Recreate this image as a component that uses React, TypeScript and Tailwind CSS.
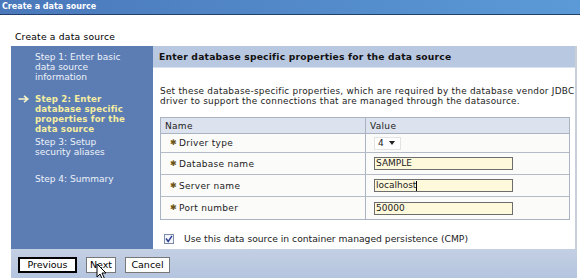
import { useState } from 'react';

const rows = [
  { label: 'Driver type', kind: 'select', value: '4', h: 'h-[19px]' },
  { label: 'Database name', kind: 'input', value: 'SAMPLE', h: 'h-[22px]' },
  { label: 'Server name', kind: 'input', value: 'localhost', h: 'h-[22px]' },
  { label: 'Port number', kind: 'input', value: '50000', h: 'h-[22px]' },
];

function Cursor() {
  return (
    <svg width="12" height="18" viewBox="0 0 12 18" className="absolute left-[96px] top-[263px]">
      <path d="M1 1 L1 14 L4 11 L6.5 16.5 L8.5 15.5 L6 10 L10 10 Z" fill="#ffffff" stroke="#000000" strokeWidth="1" />
    </svg>
  );
}

export default function App() {
  const [cmp, setCmp] = useState(true);

  return (
    <div className="relative w-[580px] h-[278px] overflow-hidden bg-white text-black font-['DejaVu_Sans',Verdana,sans-serif]">
      {/* Barra de título */}
      <div className="h-[15px] bg-gradient-to-r from-[#4a78bb] to-[#5b9ad6] border-b border-[#23406b] pl-[2px] text-[8px] font-bold text-white leading-[14px]">
        Create a data source
      </div>

      <div className="h-[31px] pl-[15px] pt-[16px] text-[9.2px] leading-[12px] tracking-[0.2px]">Create a data source</div>

      <div className="ml-[11px] mr-[3px] flex flex-col">
        <div className="flex h-[203px]">
          {/* Pasos */}
          <div className="w-[142px] shrink-0 bg-[#5b7db4] text-[9px] leading-[10px] text-[#eef2f9] pt-[6px]">
            <div className="pl-[24px]">
              Step 1: Enter basic
              <br />
              data source
              <br />
              information
            </div>
            <div className="flex mt-[12px]">
              <div className="w-[24px] flex justify-center pt-[1px]">
                <svg width="11" height="8" viewBox="0 0 11 8">
                  <path d="M0.5 4 H9.5 M6 0.8 L9.8 4 L6 7.2" fill="none" stroke="#fbf5c8" strokeWidth="1.6" />
                </svg>
              </div>
              <div className="font-bold text-[#f6eea0] text-[8.6px] tracking-[0.2px]">
                Step 2: Enter
                <br />
                database specific
                <br />
                properties for the
                <br />
                data source
              </div>
            </div>
            <div className="pl-[24px] mt-[3px]">
              Step 3: Setup
              <br />
              security aliases
            </div>
            <div className="pl-[24px] mt-[17px]">Step 4: Summary</div>
          </div>

          {/* Panel principal */}
          <div className="flex-1 min-w-0 overflow-hidden flex flex-col bg-white border-r-2 border-[#c9cfd8]">
            <div className="h-[22px] bg-[#b9c8e1] border-b border-[#d9e1ee] pl-[6px] text-[9.2px] font-bold leading-[22px] tracking-[0.2px] text-[#111]">
              Enter database specific properties for the data source
            </div>
            <div className="pl-[7px] pr-[5px] pt-[18px] text-[8.9px] leading-[10px] text-[#222]">
              <p className="whitespace-nowrap tracking-[0.25px]">
                Set these database-specific properties, which are required by the database vendor JDBC
                <br />
                driver to support the connections that are managed through the datasource.
              </p>

              <div className="mt-[11px] border border-[#a9b3c2] text-[9px] tracking-[0.3px]">
                <div className="flex h-[16px] bg-[#dde3ee] border-b border-[#a9b3c2] leading-[16px]">
                  <div className="w-[205px] pl-[4px] border-r border-[#a9b3c2]">Name</div>
                  <div className="flex-1 pl-[4px]">Value</div>
                </div>
                {rows.map((r, i) => (
                  <div
                    key={r.label}
                    className={`flex ${r.h} bg-[#fbfbfa] ${i < rows.length - 1 ? 'border-b border-[#b5bcc8]' : ''}`}
                  >
                    <div className="w-[205px] pl-[9px] border-r border-[#a9b3c2] flex items-center gap-[2px]">
                      <span className="text-[8px] font-bold text-[#6b5414]">✱</span>
                      <span>{r.label}</span>
                    </div>
                    <div className="flex-1 pl-[8px] flex items-center tracking-normal">
                      {r.kind === 'select' ? (
                        <div className="h-[13px] w-[27px] bg-white border border-[#e3e3e3] flex items-center pl-[3px] gap-[5px]">
                          4
                          <svg width="6" height="4" viewBox="0 0 6 4">
                            <path d="M0 0 H6 L3 4 Z" fill="#222" />
                          </svg>
                        </div>
                      ) : (
                        <div className="h-[13px] w-[139px] bg-[#fff9dc] border border-[#6d6d6d] pl-[1px] leading-[11px] flex items-center">
                          {r.value}
                          {r.label === 'Server name' && <span className="w-px h-[10px] bg-black" />}
                        </div>
                      )}
                    </div>
                  </div>
                ))}
              </div>

              <label className="flex items-center mt-[14px] gap-[10px] pl-[4px] text-[9.2px]">
                <span
                  onClick={() => setCmp(!cmp)}
                  className="w-[10px] h-[10px] border border-[#7b8aa6] bg-[#f4f6fb] flex items-center justify-center"
                >
                  {cmp && (
                    <svg width="8" height="8" viewBox="0 0 8 8">
                      <path d="M1 3.5 L3.2 6.5 L7 0.8" fill="none" stroke="#2b3f8c" strokeWidth="1.4" />
                    </svg>
                  )}
                </span>
                <span>Use this data source in container managed persistence (CMP)</span>
              </label>
            </div>
          </div>
        </div>

        {/* Botonera */}
        <div className="h-[29px] bg-gradient-to-b from-[#c3cfe3] to-[#b5c5df] flex items-start pt-[8px] pl-[7px] gap-[9px] text-[9.5px]">
          <button className="h-[16px] w-[59px] bg-white border-2 border-black leading-[12px]">Previous</button>
          <button className="h-[16px] w-[30px] bg-white border border-[#777] leading-[14px]">Next</button>
          <button className="h-[16px] w-[45px] bg-white border border-[#777] leading-[14px]">Cancel</button>
        </div>
      </div>

      <Cursor />
    </div>
  );
}
